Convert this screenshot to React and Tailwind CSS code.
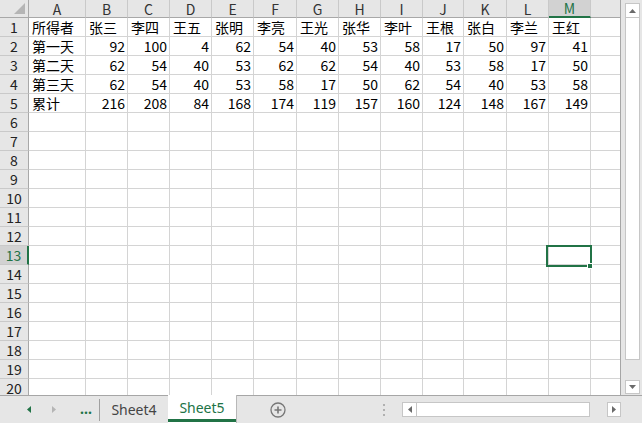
import React from "react";

const COLS = ["A", "B", "C", "D", "E", "F", "G", "H", "I", "J", "K", "L", "M"];
const WIDTHS = ["w-[57px]", "w-[42px]", "w-[42px]", "w-[42px]", "w-[42px]", "w-[43px]", "w-[42px]", "w-[42px]", "w-[42px]", "w-[41px]", "w-[43px]", "w-[42px]", "w-[42px]"];

const DATA = [
  ["所得者", "张三", "李四", "王五", "张明", "李亮", "王光", "张华", "李叶", "王根", "张白", "李兰", "王红"],
  ["第一天", 92, 100, 4, 62, 54, 40, 53, 58, 17, 50, 97, 41],
  ["第二天", 62, 54, 40, 53, 62, 62, 54, 40, 53, 58, 17, 50],
  ["第三天", 62, 54, 40, 53, 58, 17, 50, 62, 54, 40, 53, 58],
  ["累计", 216, 208, 84, 168, 174, 119, 157, 160, 124, 148, 167, 149],
];

const ROWS = Array.from({ length: 20 }, (_, i) => i + 1);

const font = { fontFamily: '"Noto Sans CJK SC", "Noto Sans", sans-serif' };

function ColumnHeader() {
  return (
    <div className="flex h-[18px] shrink-0">
      <div className="relative w-[29px] h-full border-r border-b border-[#a8a8a8] bg-[#e6e6e6]">
        <svg className="absolute right-[3px] bottom-[3px]" width="11" height="11" viewBox="0 0 11 11">
          <polygon points="11,0 11,11 0,11" fill="#b5b5b5" />
        </svg>
      </div>
      {COLS.map((c, i) => {
        const active = c === "M";
        return (
          <div
            key={c}
            className={`${WIDTHS[i]} h-full flex items-center justify-center text-[14px] border-r border-[#c9c9c9] ${
              active
                ? "bg-[#d2d2d2] text-[#217346] leading-[15px] border-b-2 border-b-[#217346]"
                : "bg-[#e6e6e6] text-[#333] leading-[16px] border-b border-b-[#a8a8a8]"
            }`}
          >
            {c}
          </div>
        );
      })}
      <div className="flex-1 h-full bg-[#e6e6e6] border-b border-[#a8a8a8]" />
    </div>
  );
}

function Row({ n }) {
  const values = DATA[n - 1];
  const active = n === 13;
  return (
    <div className="flex h-[19px] shrink-0">
      <div
        className={`w-[29px] h-full flex items-center justify-center text-[14px] leading-[18px] border-b border-b-[#c9c9c9] ${
          active
            ? "bg-[#d2d2d2] text-[#217346] border-r-2 border-r-[#217346]"
            : "bg-[#e6e6e6] text-[#222] border-r border-r-[#a8a8a8]"
        }`}
      >
        {n}
      </div>
      {COLS.map((c, i) => {
        const v = values ? values[i] : "";
        const isNum = typeof v === "number";
        return (
          <div
            key={c}
            className={`${WIDTHS[i]} h-full flex items-center border-r border-b border-[#d4d4d4] text-[14px] leading-[18px] text-black whitespace-nowrap ${
              isNum ? "justify-end pr-[2px]" : "justify-start pl-[3px]"
            }`}
          >
            {v}
          </div>
        );
      })}
      <div className="flex-1 h-full border-b border-[#d4d4d4]" />
    </div>
  );
}

function Arrow({ dir, color = "#6a6a6a" }) {
  const pts = {
    up: "0,4 7,4 3.5,0",
    down: "0,0 7,0 3.5,4",
    left: "4,0 4,7 0,3.5",
    right: "0,0 0,7 4,3.5",
  }[dir];
  const vertical = dir === "up" || dir === "down";
  return (
    <svg width={vertical ? 7 : 4} height={vertical ? 4 : 7} viewBox={vertical ? "0 0 7 4" : "0 0 4 7"}>
      <polygon points={pts} fill={color} />
    </svg>
  );
}

function VerticalScroll() {
  return (
    <div className="w-[21px] h-full bg-[#e6e6e6] flex flex-col items-center pt-[3px] pl-[1px]">
      <div className="w-[15px] h-[15px] bg-white border border-[#c6c6c6] flex items-center justify-center">
        <Arrow dir="up" />
      </div>
      <div className="w-[15px] h-[342px] bg-white border border-[#c6c6c6] border-t-0" />
      <div className="flex-1" />
      <div className="w-[15px] h-[14px] mb-px bg-white border border-[#c6c6c6] flex items-center justify-center">
        <Arrow dir="down" />
      </div>
    </div>
  );
}

function TabBar() {
  return (
    <div className="flex h-[28px] shrink-0 bg-[#e6e6e6] border-t border-[#a6a6a6] items-center" style={{ fontFamily: '"Noto Sans", sans-serif' }}>
      <div className="w-[21px]" />
      <div className="w-[16px] flex justify-center">
        <Arrow dir="left" color="#217346" />
      </div>
      <div className="w-[24px] flex justify-center pl-[10px]">
        <Arrow dir="right" color="#b5b5b5" />
      </div>
      <div className="w-[38px] flex justify-center text-[#217346] font-bold text-[14px] leading-none pb-[2px] pl-[12px]">...</div>
      <div className="w-px h-[22px] bg-[#a0a0a0]" />
      <div className="w-[68px] h-full flex items-center justify-center text-[14px] leading-[18px] text-[#444]">Sheet4</div>
      <div className="w-[69px] h-[29px] -mt-px self-start bg-white border-r border-[#b8b8b8] flex flex-col">
        <div className="flex-1 flex items-center justify-center text-[14px] leading-[18px] text-[#217346] pt-[2px]">Sheet5</div>
        <div className="h-[3px] bg-[#217346] mb-[2px]" />
      </div>
      <div className="w-[82px] flex justify-center">
        <svg width="16" height="16" viewBox="0 0 16 16">
          <circle cx="8" cy="8" r="7" fill="none" stroke="#777" strokeWidth="1.3" />
          <path d="M8 4.5v7M4.5 8h7" stroke="#777" strokeWidth="1.6" />
        </svg>
      </div>
      <div className="w-[58px]" />
      <div className="w-[14px] flex flex-col items-center gap-[3px]">
        <div className="w-[2px] h-[2px] bg-[#b0b0b0]" />
        <div className="w-[2px] h-[2px] bg-[#b0b0b0]" />
        <div className="w-[2px] h-[2px] bg-[#b0b0b0]" />
      </div>
      <div className="w-[11px]" />
      <div className="flex h-[15px] self-start mt-[6px]">
        <div className="w-[15px] h-full bg-white border border-[#c6c6c6] flex items-center justify-center">
          <Arrow dir="left" />
        </div>
        <div className="w-[173px] h-full bg-white border border-[#c6c6c6] border-l-0" />
        <div className="w-[17px]" />
        <div className="w-[14px] h-full bg-white border border-[#c6c6c6] flex items-center justify-center">
          <Arrow dir="right" />
        </div>
      </div>
    </div>
  );
}

export default function App() {
  return (
    <div className="w-[642px] h-[423px] flex flex-col overflow-hidden bg-[#e6e6e6]" style={font}>
      <div className="flex h-[395px] shrink-0">
        <div className="relative w-[621px] h-full bg-white border-r border-[#a6a6a6] overflow-hidden flex flex-col">
          <ColumnHeader />
          {ROWS.map((n) => (
            <Row key={n} n={n} />
          ))}
          {/* selected cell M13 */}
          <div className="absolute left-[546px] top-[245px] w-[46px] h-[22px] border-2 border-[#217346]" />
          <div className="absolute left-[587px] top-[263px] w-[6px] h-[6px] bg-[#217346] border border-white" />
        </div>
        <VerticalScroll />
      </div>
      <TabBar />
    </div>
  );
}
